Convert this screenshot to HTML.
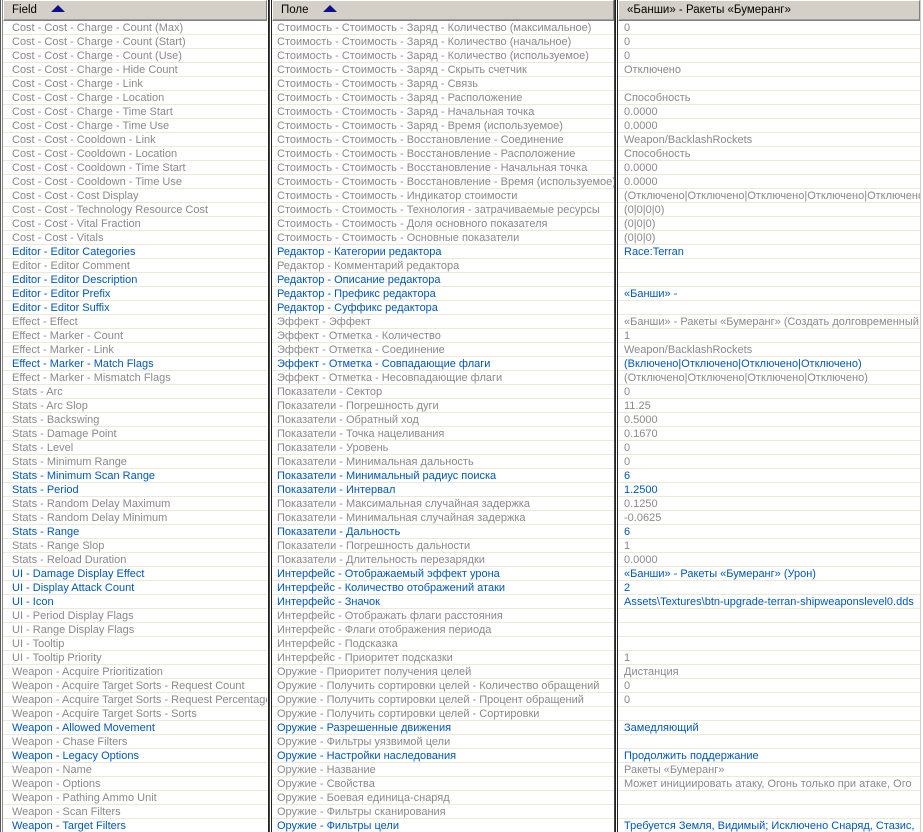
<!DOCTYPE html><html><head><meta charset="utf-8"><style>
body{margin:0;width:923px;height:832px;overflow:hidden;background:#fff;font-family:"Liberation Sans",sans-serif;font-size:11px;position:relative}
.col{position:absolute;top:0;height:832px;overflow:hidden}
.h{height:19px;background:#d4d0c8;border-top:1px solid #fff;border-left:1px solid #fff;border-bottom:1px solid #808080;border-right:1px solid #808080;box-shadow:inset 0 -1px #a0a0a0;line-height:19px;padding-left:8px;color:#000;font-size:11.5px;white-space:nowrap}
.r{height:13px;border-bottom:1px solid #ece9d8;line-height:14px;color:#8a8a8a;white-space:nowrap}
.b{color:#0058b8}
#c1 .r{padding-left:9px}#c2 .r{padding-left:5px}#c3 .r{padding-left:6px}
.sep{position:absolute;top:0;height:832px;width:1px;background:#222}
.tri{display:inline-block;width:0;height:0;border-left:7px solid transparent;border-right:7px solid transparent;border-bottom:7px solid #10108a;margin-left:14px;vertical-align:1px}
</style></head><body>
<div class="sep" style="left:0;background:#555"></div><div class="sep" style="left:2px;background:#888"></div>
<div class="col" style="left:3px;width:264px" id="c1"></div>
<div class="sep" style="left:268px"></div><div class="sep" style="left:269px;background:#444"></div><div class="sep" style="left:271px"></div>
<div class="col" style="left:272px;width:342px" id="c2"></div>
<div class="sep" style="left:614px;background:#444"></div><div class="sep" style="left:615px"></div><div class="sep" style="left:617px"></div>
<div class="col" style="left:618px;width:302px" id="c3"></div>
<div class="sep" style="left:920px;background:#d4d0c8"></div>
<script>
var d=[
["Cost - Cost - Charge - Count (Max)","Стоимость - Стоимость - Заряд - Количество (максимальное)","0",0],
["Cost - Cost - Charge - Count (Start)","Стоимость - Стоимость - Заряд - Количество (начальное)","0",0],
["Cost - Cost - Charge - Count (Use)","Стоимость - Стоимость - Заряд - Количество (используемое)","0",0],
["Cost - Cost - Charge - Hide Count","Стоимость - Стоимость - Заряд - Скрыть счетчик","Отключено",0],
["Cost - Cost - Charge - Link","Стоимость - Стоимость - Заряд - Связь","",0],
["Cost - Cost - Charge - Location","Стоимость - Стоимость - Заряд - Расположение","Способность",0],
["Cost - Cost - Charge - Time Start","Стоимость - Стоимость - Заряд - Начальная точка","0.0000",0],
["Cost - Cost - Charge - Time Use","Стоимость - Стоимость - Заряд - Время (используемое)","0.0000",0],
["Cost - Cost - Cooldown - Link","Стоимость - Стоимость - Восстановление - Соединение","Weapon/BacklashRockets",0],
["Cost - Cost - Cooldown - Location","Стоимость - Стоимость - Восстановление - Расположение","Способность",0],
["Cost - Cost - Cooldown - Time Start","Стоимость - Стоимость - Восстановление - Начальная точка","0.0000",0],
["Cost - Cost - Cooldown - Time Use","Стоимость - Стоимость - Восстановление - Время (используемое)","0.0000",0],
["Cost - Cost - Cost Display","Стоимость - Стоимость - Индикатор стоимости","(Отключено|Отключено|Отключено|Отключено|Отключено",0],
["Cost - Cost - Technology Resource Cost","Стоимость - Стоимость - Технология - затрачиваемые ресурсы","(0|0|0|0)",0],
["Cost - Cost - Vital Fraction","Стоимость - Стоимость - Доля основного показателя","(0|0|0)",0],
["Cost - Cost - Vitals","Стоимость - Стоимость - Основные показатели","(0|0|0)",0],
["Editor - Editor Categories","Редактор - Категории редактора","Race:Terran",1],
["Editor - Editor Comment","Редактор - Комментарий редактора","",0],
["Editor - Editor Description","Редактор - Описание редактора","",1],
["Editor - Editor Prefix","Редактор - Префикс редактора","«Банши» -",1],
["Editor - Editor Suffix","Редактор - Суффикс редактора","",1],
["Effect - Effect","Эффект - Эффект","«Банши» - Ракеты «Бумеранг» (Создать долговременный",0],
["Effect - Marker - Count","Эффект - Отметка - Количество","1",0],
["Effect - Marker - Link","Эффект - Отметка - Соединение","Weapon/BacklashRockets",0],
["Effect - Marker - Match Flags","Эффект - Отметка - Совпадающие флаги","(Включено|Отключено|Отключено|Отключено)",1],
["Effect - Marker - Mismatch Flags","Эффект - Отметка - Несовпадающие флаги","(Отключено|Отключено|Отключено|Отключено)",0],
["Stats - Arc","Показатели - Сектор","0",0],
["Stats - Arc Slop","Показатели - Погрешность дуги","11.25",0],
["Stats - Backswing","Показатели - Обратный ход","0.5000",0],
["Stats - Damage Point","Показатели - Точка нацеливания","0.1670",0],
["Stats - Level","Показатели - Уровень","0",0],
["Stats - Minimum Range","Показатели - Минимальная дальность","0",0],
["Stats - Minimum Scan Range","Показатели - Минимальный радиус поиска","6",1],
["Stats - Period","Показатели - Интервал","1.2500",1],
["Stats - Random Delay Maximum","Показатели - Максимальная случайная задержка","0.1250",0],
["Stats - Random Delay Minimum","Показатели - Минимальная случайная задержка","-0.0625",0],
["Stats - Range","Показатели - Дальность","6",1],
["Stats - Range Slop","Показатели - Погрешность дальности","1",0],
["Stats - Reload Duration","Показатели - Длительность перезарядки","0.0000",0],
["UI - Damage Display Effect","Интерфейс - Отображаемый эффект урона","«Банши» - Ракеты «Бумеранг» (Урон)",1],
["UI - Display Attack Count","Интерфейс - Количество отображений атаки","2",1],
["UI - Icon","Интерфейс - Значок","Assets\\Textures\\btn-upgrade-terran-shipweaponslevel0.dds",1],
["UI - Period Display Flags","Интерфейс - Отображать флаги расстояния","",0],
["UI - Range Display Flags","Интерфейс - Флаги отображения периода","",0],
["UI - Tooltip","Интерфейс - Подсказка","",0],
["UI - Tooltip Priority","Интерфейс - Приоритет подсказки","1",0],
["Weapon - Acquire Prioritization","Оружие - Приоритет получения целей","Дистанция",0],
["Weapon - Acquire Target Sorts - Request Count","Оружие - Получить сортировки целей - Количество обращений","0",0],
["Weapon - Acquire Target Sorts - Request Percentage","Оружие - Получить сортировки целей - Процент обращений","0",0],
["Weapon - Acquire Target Sorts - Sorts","Оружие - Получить сортировки целей - Сортировки","",0],
["Weapon - Allowed Movement","Оружие - Разрешенные движения","Замедляющий",1],
["Weapon - Chase Filters","Оружие - Фильтры уязвимой цели","",0],
["Weapon - Legacy Options","Оружие - Настройки наследования","Продолжить поддержание",1],
["Weapon - Name","Оружие - Название","Ракеты «Бумеранг»",0],
["Weapon - Options","Оружие - Свойства","Может инициировать атаку, Огонь только при атаке, Ого",0],
["Weapon - Pathing Ammo Unit","Оружие - Боевая единица-снаряд","",0],
["Weapon - Scan Filters","Оружие - Фильтры сканирования","",0],
["Weapon - Target Filters","Оружие - Фильтры цели","Требуется Земля, Видимый; Исключено Снаряд, Стазис,",1]];
var c=[document.getElementById('c1'),document.getElementById('c2'),document.getElementById('c3')];
c[0].innerHTML='<div class="h">Field<span class="tri"></span></div>';
c[1].innerHTML='<div class="h">Поле<span class="tri"></span></div>';
c[2].innerHTML='<div class="h">«Банши» - Ракеты «Бумеранг»</div>';
var h=['','',''];
d.forEach(function(r){for(var i=0;i<3;i++){h[i]+='<div class="r'+(r[3]?' b':'')+'">'+r[i].replace(/</g,'&lt;')+'</div>';}});
for(var i=0;i<3;i++)c[i].innerHTML+=h[i];
</script></body></html>
